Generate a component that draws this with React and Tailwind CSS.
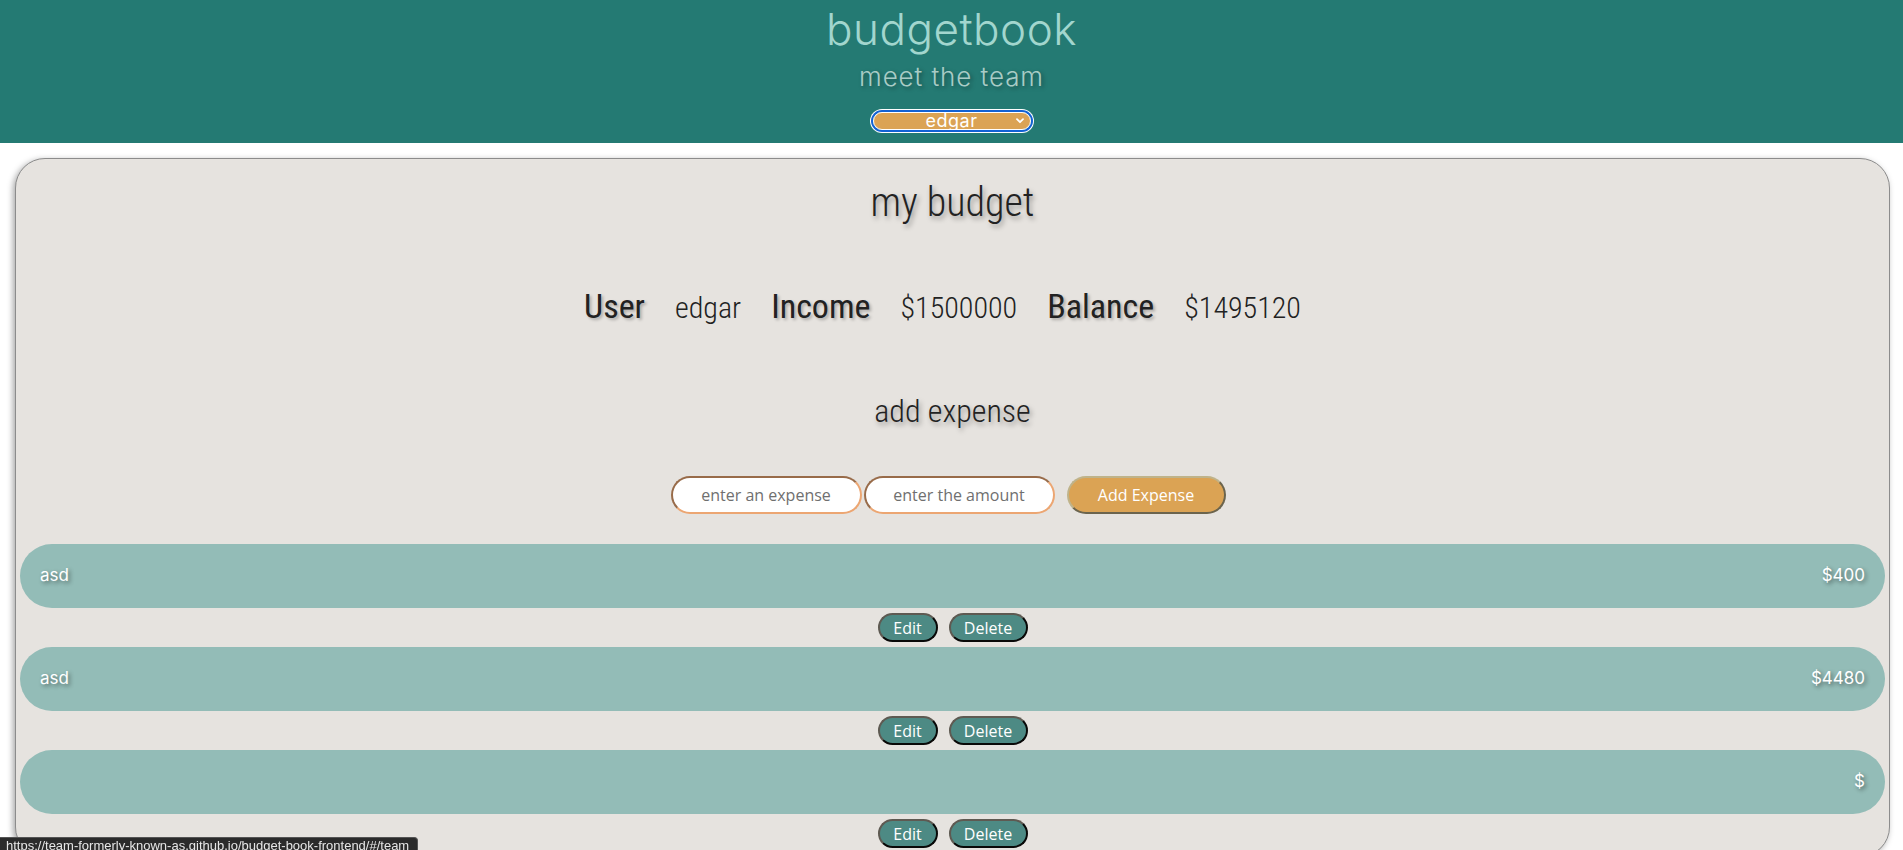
import React from "react";

const condensed = { fontFamily: '"Roboto Condensed", "Liberation Sans Narrow", "DejaVu Sans Condensed", Roboto, sans-serif' };
const mont = { fontFamily: 'Inter, "Open Sans", sans-serif' };
const open = { fontFamily: '"Open Sans", "Noto Sans", sans-serif' };

function ExpenseRow({ name, amount }) {
  return (
    <div className="flex flex-col items-center">
      <div className="w-full h-[64px] rounded-full bg-[#93bcb7] flex items-center justify-between pl-[20px] pr-[20px]">
        <span className="text-white text-[17px] [text-shadow:2px_2px_4px_rgba(0,0,0,0.45)]" style={mont}>{name}</span>
        <span className="text-white text-[17px] [text-shadow:2px_2px_4px_rgba(0,0,0,0.45)]" style={mont}>{amount}</span>
      </div>
      <div className="flex gap-[11px] mt-[5px] mb-[5px]">
        <button className="w-[60px] h-[29px] rounded-full bg-[#4d8a84] text-white text-[16px] border-2 [border-style:outset] border-[#5e5a52] leading-none" style={open}>Edit</button>
        <button className="w-[79px] h-[29px] rounded-full bg-[#4d8a84] text-white text-[16px] border-2 [border-style:outset] border-[#5e5a52] leading-none" style={open}>Delete</button>
      </div>
    </div>
  );
}

export default function App() {
  return (
    <div className="min-h-[850px] bg-white">
      <header className="h-[143px] bg-[#247a73] flex flex-col items-center">
        <h1 className="text-[44px] leading-[50px] font-light text-[#a2d6ce] mt-[4px] tracking-[0.5px]" style={mont}>budgetbook</h1>
        <h2 className="text-[26px] leading-[32px] font-light text-[#a9ccc6] mt-[7px] tracking-[0.9px] [text-shadow:2px_2px_4px_rgba(0,0,0,0.35)]" style={mont}>meet the team</h2>
        <div className="relative mt-[19px] rounded-full shadow-[0_0_0_2px_#1262d4,0_0_0_3px_#ffffff]">
          <select defaultValue="edgar" className="appearance-none w-[158px] h-[18px] rounded-full bg-[#dba354] border border-white text-white text-[18px] leading-[16px] tracking-[0.5px] text-center outline-none block" style={mont}>
            <option value="edgar">edgar</option>
          </select>
          <svg className="absolute right-[7px] top-[6px] pointer-events-none" width="8" height="6" viewBox="0 0 8 6">
            <path d="M1 1.2 L4 4.2 L7 1.2" fill="none" stroke="white" strokeWidth="1.8" strokeLinecap="round" strokeLinejoin="round" />
          </svg>
        </div>
      </header>

      <main className="ml-[15px] mr-[13px] mt-[15px] rounded-[30px] bg-[#e6e3df] border border-[#8c8c8c] shadow-[-2px_2px_6px_rgba(0,0,0,0.35)] px-[4px] pb-[3px]">
        <h2 className="text-center text-[40px] leading-[46px] text-[#222] mt-[21px] font-light [text-shadow:2px_3px_5px_rgba(0,0,0,0.35)]" style={condensed}>my budget</h2>

        <div className="flex justify-center items-baseline gap-[30px] mt-[55px] pr-[20px] text-[#222]" style={condensed}>
          <span className="text-[34px] font-normal [text-shadow:2px_2px_3px_rgba(0,0,0,0.25)]">User</span>
          <span className="text-[30px] font-light">edgar</span>
          <span className="text-[34px] font-normal [text-shadow:2px_2px_3px_rgba(0,0,0,0.25)]">Income</span>
          <span className="text-[30px] font-light">$1500000</span>
          <span className="text-[34px] font-normal [text-shadow:2px_2px_3px_rgba(0,0,0,0.25)]">Balance</span>
          <span className="text-[30px] font-light">$1495120</span>
        </div>

        <h3 className="text-center text-[32px] leading-[38px] text-[#222] mt-[60px] font-light [text-shadow:2px_3px_5px_rgba(0,0,0,0.35)]" style={condensed}>add expense</h3>

        <div className="flex justify-center items-center mt-[46px] pr-[9px]">
          <input placeholder="enter an expense" className="w-[191px] h-[38px] rounded-full bg-white border-2 [border-style:inset] border-[#eca672] text-center text-[16px] placeholder:text-[#6f6f6f] outline-none" style={open} />
          <input placeholder="enter the amount" className="ml-[2px] w-[191px] h-[38px] rounded-full bg-white border-2 [border-style:inset] border-[#eca672] text-center text-[16px] placeholder:text-[#6f6f6f] outline-none" style={open} />
          <button className="ml-[12px] w-[159px] h-[38px] rounded-full bg-[#dba354] text-white text-[16px] border-2 [border-style:outset] border-[#bfb38a]" style={open}>Add Expense</button>
        </div>

        <div className="mt-[30px]">
          <ExpenseRow name="asd" amount="$400" />
          <ExpenseRow name="asd" amount="$4480" />
          <ExpenseRow name="" amount="$" />
        </div>
      </main>

      <div className="fixed left-0 bottom-[-4px] h-[17px] pl-[6px] pr-[8px] bg-[#2b2b2b] border-t border-r border-[#555] rounded-tr-[4px] text-[#e6e6e6] text-[13px] leading-[16px]" style={{ fontFamily: '"Liberation Sans", Arial, sans-serif' }}>
        https://team-formerly-known-as.github.io/budget-book-frontend/#/team
      </div>
    </div>
  );
}
